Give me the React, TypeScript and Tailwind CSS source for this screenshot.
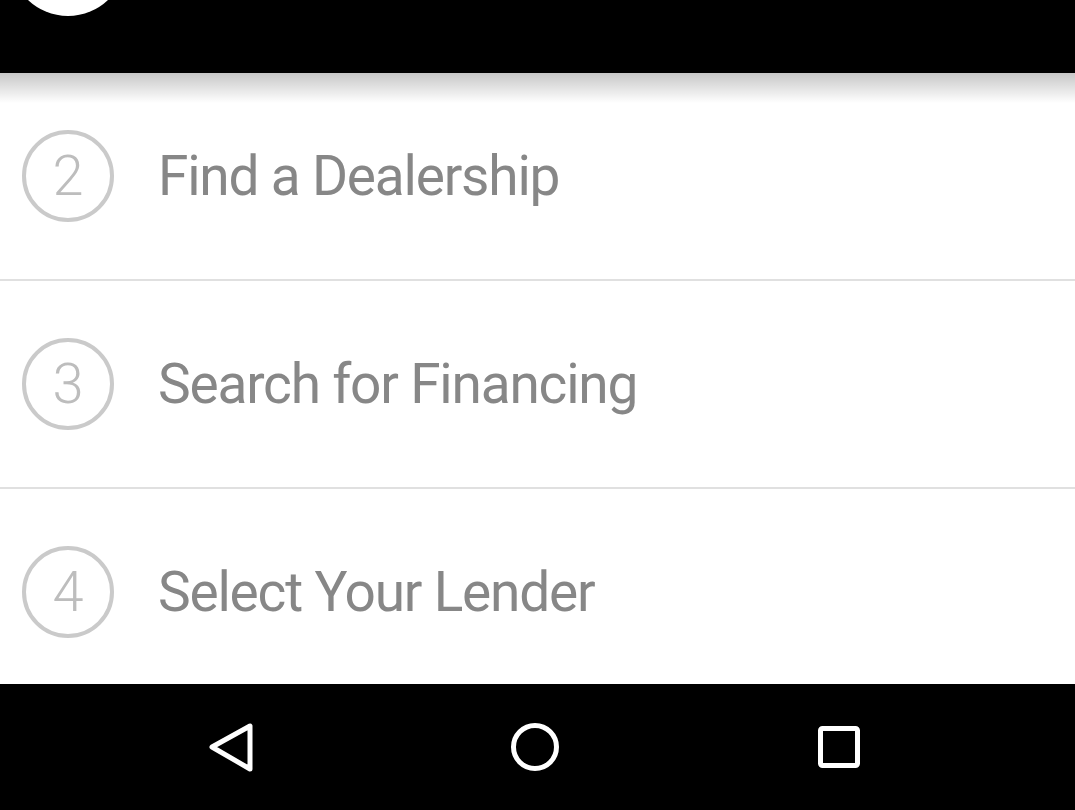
import React from "react";

const steps = [
  { n: "2", label: "Find a Dealership" },
  { n: "3", label: "Search for Financing" },
  { n: "4", label: "Select Your Lender" },
];

export default function App() {
  return (
    <div
      className="w-[1075px] h-[810px] bg-white flex flex-col overflow-hidden"
      style={{ fontFamily: "Roboto, 'Liberation Sans', sans-serif" }}
    >
      <div className="relative h-[73px] shrink-0 bg-black z-10">
        <div className="absolute left-[10px] top-[-100px] w-[116px] h-[116px] rounded-full bg-white" />
        <div className="absolute left-0 right-0 top-full h-[30px] bg-linear-to-b from-[rgba(0,0,0,0.22)] to-transparent" />
      </div>
      <div className="flex-1 flex flex-col overflow-hidden">
        {steps.map((s) => (
          <div
            key={s.n}
            className="h-[208px] shrink-0 border-b-2 border-[#e0e0e0] flex items-center"
          >
            <div className="ml-[22px] w-[92px] h-[92px] rounded-full border-4 border-[#cacaca] flex items-center justify-center">
              <span className="text-[56px] leading-none font-light text-[#bdbdbd]">
                {s.n}
              </span>
            </div>
            <span className="ml-[44px] text-[55px] leading-none tracking-[-1.2px] text-[#878787]">
              {s.label}
            </span>
          </div>
        ))}
      </div>
      <div className="h-[126px] shrink-0 bg-black flex items-center pl-[201px] gap-[244px]">
        <svg width="60" height="60" viewBox="0 0 60 60" fill="none">
          <polygon
            points="11,30 49,9 49,52"
            stroke="white"
            strokeWidth="5"
            strokeLinejoin="round"
          />
        </svg>
        <svg width="60" height="60" viewBox="0 0 60 60" fill="none">
          <circle cx="30" cy="30" r="21.5" stroke="white" strokeWidth="5" />
        </svg>
        <svg width="60" height="60" viewBox="0 0 60 60" fill="none">
          <rect
            x="11.5"
            y="11.5"
            width="37"
            height="37"
            rx="2"
            stroke="white"
            strokeWidth="5"
          />
        </svg>
      </div>
    </div>
  );
}
